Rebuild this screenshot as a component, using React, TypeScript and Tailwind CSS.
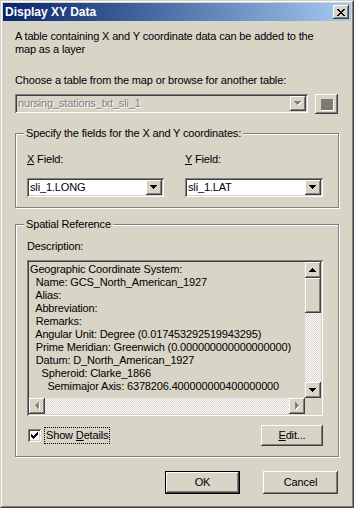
import React from "react";

const raised =
  "shadow-[inset_-1px_-1px_0_#404040,inset_1px_1px_0_#ffffff,inset_-2px_-2px_0_#808080,inset_2px_2px_0_#d4d0c8]";
const sunken =
  "shadow-[inset_1px_1px_0_#808080,inset_-1px_-1px_0_#ffffff,inset_2px_2px_0_#404040,inset_-2px_-2px_0_#d4d0c8]";
const checker =
  "bg-[repeating-conic-gradient(#ffffff_0_25%,#d4d0c8_0_50%)] bg-[length:2px_2px]";

function Arrow({ dir, disabled }: { dir: "up" | "down" | "left" | "right"; disabled?: boolean }) {
  const pts: Record<string, string> = {
    down: "0,0 7,0 3.5,4",
    up: "0,4 7,4 3.5,0",
    left: "4,0 4,7 0,3.5",
    right: "0,0 0,7 4,3.5",
  };
  const vertical = dir === "up" || dir === "down";
  const w = vertical ? 7 : 4;
  const h = vertical ? 4 : 7;
  return (
    <svg width={w + 1} height={h + 1} viewBox={`0 0 ${w + 1} ${h + 1}`} shapeRendering="crispEdges">
      {disabled && <polygon points={pts[dir]} fill="#ffffff" transform="translate(1,1)" />}
      <polygon points={pts[dir]} fill={disabled ? "#808080" : "#000000"} />
    </svg>
  );
}

function Combo({ value, className, disabled }: { value: string; className: string; disabled?: boolean }) {
  return (
    <div className={`flex h-[19px] p-[2px] ${sunken} ${disabled ? "bg-[#d8d4c6]" : "bg-white"} ${className}`}>
      <div
        className={`flex-1 truncate pl-[1px] leading-[15px] ${
          disabled ? "text-[#808080] [text-shadow:1px_1px_0_#ffffff]" : "text-black"
        }`}
      >
        {value}
      </div>
      <div className={`flex h-[15px] w-[16px] items-center justify-center bg-[#d8d4c6] ${raised}`}>
        <Arrow dir="down" disabled={disabled} />
      </div>
    </div>
  );
}

function Group({ label, className, children }: { label: string; className: string; children: React.ReactNode }) {
  return (
    <div className={`relative border border-[#808080] shadow-[inset_1px_1px_0_#ffffff,1px_1px_0_#ffffff] ${className}`}>
      <span className="absolute -top-[7px] left-[8px] bg-[#d8d4c6] px-[2px] leading-[13px]">{label}</span>
      {children}
    </div>
  );
}

const details = [
  "Geographic Coordinate System:",
  "  Name: GCS_North_American_1927",
  "  Alias:",
  "  Abbreviation:",
  "  Remarks:",
  "  Angular Unit: Degree (0.017453292519943295)",
  "  Prime Meridian: Greenwich (0.000000000000000000)",
  "  Datum: D_North_American_1927",
  "    Spheroid: Clarke_1866",
  "      Semimajor Axis: 6378206.400000000400000000",
];

export default function App() {
  return (
    <div className="h-[508px] w-[354px] border border-t-[#d4d0c8] border-l-[#d4d0c8] border-r-[#404040] border-b-[#404040] bg-[#d8d4c6] font-['Liberation_Sans',Arial,sans-serif] text-[11px] tracking-[-0.15px] text-black">
      <div className="h-full border border-t-white border-l-white border-r-[#808080] border-b-[#808080] p-[1px]">
        {/* Title bar */}
        <div className="flex h-[18px] items-center bg-gradient-to-r from-[#0a246a] to-[#a6caf0] pl-[2px] pr-[2px]">
          <span className="text-[12px] font-bold tracking-normal text-white">Display XY Data</span>
          <div className={`ml-auto flex h-[14px] w-[16px] items-center justify-center bg-[#d8d4c6] ${raised}`}>
            <svg width="8" height="7" viewBox="0 0 8 7" shapeRendering="crispEdges">
              <path d="M0 0h2v1h-2zM6 0h2v1h-2zM1 1h2v1h-2zM5 1h2v1h-2zM2 2h4v1h-4zM3 3h2v1h-2zM2 4h4v1h-4zM1 5h2v1h-2zM5 5h2v1h-2zM0 6h2v1h-2zM6 6h2v1h-2z" fill="#000" />
            </svg>
          </div>
        </div>

        <div className="px-[12px]">
          <p className="mt-[9px] w-[310px] leading-[13px]">
            A table containing X and Y coordinate data can be added to the map as a layer
          </p>

          <p className="mt-[18px] leading-[13px]">Choose a table from the map or browse for another table:</p>

          <div className="mt-[7px] flex items-start gap-[7px]">
            <Combo value="nursing_stations_txt_sli_1" className="w-[293px]" disabled />
            <div className={`flex h-[20px] w-[23px] items-center justify-center bg-[#d8d4c6] ${raised}`}>
              <div className="h-[11px] w-[12px] bg-[#7c7a78] shadow-[1px_1px_0_#ffffff]" />
            </div>
          </div>

          <Group label="Specify the fields for the X and Y coordinates:" className="mt-[19px] h-[75px] pl-[11px] pt-[19px]">
            <div className="flex gap-[21px]">
              <div className="w-[137px]">
                <div className="leading-[13px]">
                  <span className="underline">X</span> Field:
                </div>
                <Combo value="sli_1.LONG" className="mt-[12px] w-[137px]" />
              </div>
              <div className="w-[138px]">
                <div className="leading-[13px]">
                  <span className="underline">Y</span> Field:
                </div>
                <Combo value="sli_1.LAT" className="mt-[12px] w-[138px]" />
              </div>
            </div>
          </Group>

          <Group label="Spatial Reference" className="mt-[16px] h-[233px] pl-[11px] pt-[15px]">
            <div className="leading-[13px]">Description:</div>
            <div className={`mt-[7px] flex h-[156px] w-[296px] flex-col p-[2px] ${sunken}`}>
              <div className="flex h-[136px]">
                <div className="flex-1 overflow-hidden whitespace-pre pl-[1px] pt-[1px] leading-[13px]">
                  {details.map((l) => (
                    <div key={l}>{l}</div>
                  ))}
                </div>
                <div className="flex w-[16px] flex-col">
                  <div className={`flex h-[16px] items-center justify-center bg-[#d8d4c6] ${raised}`}>
                    <Arrow dir="up" />
                  </div>
                  <div className={`h-[35px] bg-[#d8d4c6] ${raised}`} />
                  <div className={`flex-1 ${checker}`} />
                  <div className={`flex h-[16px] items-center justify-center bg-[#d8d4c6] ${raised}`}>
                    <Arrow dir="down" />
                  </div>
                </div>
              </div>
              <div className="flex h-[16px]">
                <div className={`flex w-[16px] items-center justify-center bg-[#d8d4c6] ${raised}`}>
                  <Arrow dir="left" disabled />
                </div>
                <div className={`flex-1 ${checker}`} />
                <div className={`flex w-[16px] items-center justify-center bg-[#d8d4c6] ${raised}`}>
                  <Arrow dir="right" disabled />
                </div>
                <div className="w-[16px]" />
              </div>
            </div>

            <div className="mt-[9px] flex h-[21px] w-[296px] items-center">
              <div className={`ml-[1px] flex h-[13px] w-[13px] items-center justify-center bg-white ${sunken}`}>
                <svg width="7" height="7" viewBox="0 0 7 7" shapeRendering="crispEdges">
                  <path d="M6 0h1v3h-1zM5 1h1v3h-1zM4 2h1v3h-1zM3 3h1v3h-1zM2 4h1v3h-1zM1 3h1v3h-1zM0 2h1v3h-1z" fill="#000" />
                </svg>
              </div>
              <div className="ml-[3px] border border-dotted border-black px-[1px] leading-[15px]">
                Show <span className="underline">D</span>etails
              </div>
              <div className={`ml-auto flex h-[21px] w-[62px] items-center justify-center bg-[#d8d4c6] ${raised}`}>
                <span>
                  <span className="underline">E</span>dit...
                </span>
              </div>
            </div>
          </Group>

          <div className="mt-[14px] flex justify-end gap-[23px] pr-[1px]">
            <div className="h-[23px] w-[75px] border border-black">
              <div className={`flex h-full w-full items-center justify-center bg-[#d8d4c6] ${raised}`}>OK</div>
            </div>
            <div className={`flex h-[23px] w-[75px] items-center justify-center bg-[#d8d4c6] ${raised}`}>Cancel</div>
          </div>
        </div>
      </div>
    </div>
  );
}
